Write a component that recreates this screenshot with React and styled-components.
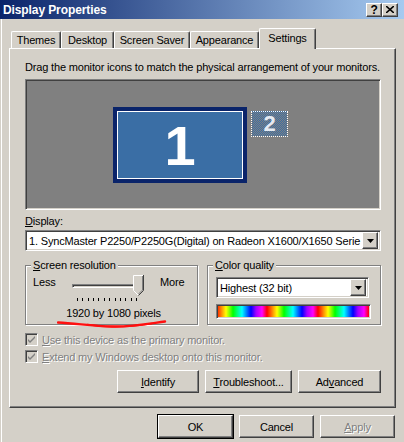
import React from 'react'
import styled, { createGlobalStyle, css } from 'styled-components'

const face = '#D4D0C8'
const shade = '#808080'
const dark = '#404040'

const GlobalStyle = createGlobalStyle`
  html, body {
    margin: 0;
    padding: 0;
    background: ${face};
  }
  body {
    font-family: "Liberation Sans", Arial, sans-serif;
    font-size: 11px;
    letter-spacing: -0.17px;
    color: #000;
  }
`

const raised = css`
  border: 1px solid;
  border-color: #fff ${dark} ${dark} #fff;
  box-shadow: inset -1px -1px 0 ${shade};
`
const sunken = css`
  border: 1px solid;
  border-color: ${shade} #fff #fff ${shade};
  box-shadow: inset 1px 1px 0 ${dark}, inset -1px -1px 0 ${face};
`
const disabledText = css`
  color: ${shade};
  text-shadow: 1px 1px 0 #fff;
`

const Window = styled.div`
  width: 404px;
  height: 442px;
  background: ${face};
  display: flex;
  flex-direction: column;
  overflow: hidden;
`
const TitleBar = styled.div`
  flex: none;
  height: 19px;
  display: flex;
  align-items: center;
  justify-content: space-between;
  padding: 0 6px 0 3px;
  background: linear-gradient(90deg, #0a246a 0%, #a6caf0 100%);
  color: #fff;
  font-weight: bold;
  font-size: 12px;
  letter-spacing: -0.1px;
`
const TitleButtons = styled.div`
  display: flex;
`
const TitleButton = styled.div`
  ${raised}
  width: 16px;
  height: 14px;
  box-sizing: border-box;
  background: ${face};
  color: #000;
  display: flex;
  align-items: center;
  justify-content: center;
  font-size: 12px;
  font-weight: bold;
  line-height: 1;
`
const Body = styled.div`
  flex: 1;
  display: flex;
  flex-direction: column;
  margin-left: 1px;
  border-left: 1px solid #fff;
  padding: 9px 8px 0 7px;
`
const TabRow = styled.div`
  display: flex;
  align-items: flex-end;
  height: 20px;
  padding-left: 2px;
  position: relative;
  z-index: 1;
`
const Tab = styled.div`
  box-sizing: border-box;
  width: ${(p) => p.$w}px;
  height: ${(p) => (p.$active ? 21 : 17)}px;
  margin-bottom: ${(p) => (p.$active ? -1 : 0)}px;
  background: ${face};
  border-top: 1px solid #fff;
  border-left: 1px solid #fff;
  border-right: 1px solid ${dark};
  border-radius: 2px 2px 0 0;
  box-shadow: inset -1px 0 0 ${shade};
  display: flex;
  align-items: center;
  justify-content: center;
  padding-bottom: ${(p) => (p.$active ? 2 : 0)}px;
`
const Panel = styled.div`
  box-sizing: border-box;
  width: 387px;
  height: 360px;
  border-top: 1px solid #fff;
  border-left: 1px solid #fff;
  border-right: 1px solid ${dark};
  border-bottom: 1px solid ${dark};
  box-shadow: inset -1px -1px 0 ${shade};
  padding: 11px 14px 0 15px;
  display: flex;
  flex-direction: column;
`
const Hint = styled.div`
  line-height: 14px;
  white-space: nowrap;
`
const MonitorArea = styled.div`
  ${sunken}
  box-sizing: border-box;
  margin-top: 5px;
  height: 131px;
  background: ${shade};
  position: relative;
`
const Monitor = styled.div`
  position: absolute;
  left: ${(p) => p.$x}px;
  top: ${(p) => p.$y}px;
  width: ${(p) => p.$w}px;
  height: ${(p) => p.$h}px;
  box-sizing: border-box;
  display: flex;
  align-items: center;
  justify-content: center;
  color: #fff;
  font-weight: bold;
  letter-spacing: 0;
`
const PrimaryMonitor = styled(Monitor)`
  border: 4px solid #0a246a;
  box-shadow: inset 0 0 0 1px #fff;
  background: #3a6ea5;
  font-size: 56px;
`
const SecondaryMonitor = styled(Monitor)`
  border: 1px dotted #fff;
  background: repeating-conic-gradient(#3a6ea5 0 25%, ${shade} 0 50%) 0 0 / 2px 2px;
  font-size: 22px;
  color: #e4eaf2;
`
const FieldLabel = styled.div`
  margin-top: 5px;
  line-height: 13px;
`
const Key = styled.span`
  text-decoration: underline;
  text-underline-offset: 1px;
`
const Select = styled.div`
  ${sunken}
  box-sizing: border-box;
  height: 21px;
  width: ${(p) => (p.$w ? `${p.$w}px` : '100%')};
  margin-top: ${(p) => p.$mt || 0}px;
  background: #fff;
  display: flex;
  align-items: center;
  padding: 2px;
`
const SelectText = styled.div`
  flex: 1;
  min-width: 0;
  overflow: hidden;
  white-space: nowrap;
  padding-left: 1px;
`
const DropButton = styled.div`
  ${raised}
  flex: none;
  box-sizing: border-box;
  width: 16px;
  height: 17px;
  background: ${face};
  display: flex;
  align-items: center;
  justify-content: center;
`
const GroupRow = styled.div`
  display: flex;
  gap: 9px;
  margin-top: 14px;
`
const Group = styled.div`
  position: relative;
  box-sizing: border-box;
  width: ${(p) => p.$w}px;
  height: 60px;
  border: 1px solid ${shade};
  box-shadow: inset 1px 1px 0 #fff, 1px 1px 0 #fff;
  padding: ${(p) => p.$pad};
  display: flex;
  flex-direction: column;
`
const Caption = styled.div`
  position: absolute;
  top: -7px;
  left: 5px;
  padding: 0 2px;
  background: ${face};
  line-height: 13px;
`
const SliderRow = styled.div`
  display: flex;
  align-items: flex-start;
  height: 26px;
`
const EndLabel = styled.div`
  width: ${(p) => p.$w}px;
  margin-left: ${(p) => p.$ml || 0}px;
  line-height: 13px;
  margin-top: 1px;
`
const Slider = styled.div`
  width: 72px;
  display: flex;
  flex-direction: column;
`
const TrackArea = styled.div`
  position: relative;
  height: 23px;
`
const Track = styled.div`
  ${sunken}
  box-sizing: border-box;
  width: 68px;
  height: 4px;
  margin-top: 9px;
`
const Thumb = styled.svg`
  position: absolute;
  left: 61px;
  top: 0;
`
const Ticks = styled.div`
  display: flex;
  justify-content: space-between;
  width: 60px;
  height: 3px;
  margin-left: 5px;
`
const Tick = styled.span`
  width: 1px;
  height: 3px;
  background: #000;
`
const Pixels = styled.div`
  text-align: center;
  line-height: 13px;
  margin-top: 6px;
  padding-right: 3px;
`
const Scribble = styled.svg`
  position: absolute;
  left: 31px;
  top: 54px;
`
const Spectrum = styled.div`
  ${sunken}
  box-sizing: border-box;
  width: 155px;
  height: 15px;
  margin-top: 6px;
  background-origin: border-box;
  background-image: repeating-linear-gradient(
    90deg,
    #ff0000 0px,
    #ff8000 5px,
    #ffff00 10px,
    #00ff00 17px,
    #00ffff 26px,
    #0000ff 35px,
    #a000ff 40px,
    #ff00ff 46px,
    #ff0000 51px
  );
`
const CheckRow = styled.div`
  display: flex;
  align-items: center;
  height: 17px;
  margin-top: ${(p) => p.$mt || 0}px;
  ${disabledText}
`
const CheckBox = styled.div`
  ${sunken}
  box-sizing: border-box;
  width: 13px;
  height: 13px;
  background: ${face};
  margin-right: 4px;
  display: flex;
  align-items: center;
  justify-content: center;
  text-shadow: none;
`
const ButtonRow = styled.div`
  display: flex;
  justify-content: flex-end;
  gap: ${(p) => p.$gap}px;
  margin-top: ${(p) => p.$mt}px;
  padding-right: ${(p) => p.$pr || 0}px;
`
const Button = styled.div`
  ${raised}
  box-sizing: border-box;
  width: ${(p) => p.$w}px;
  height: 23px;
  background: ${face};
  display: flex;
  align-items: center;
  justify-content: center;
  ${(p) => p.$disabled && disabledText}
  ${(p) =>
    p.$default &&
    css`
      box-shadow: inset -1px -1px 0 ${shade}, 0 0 0 1px #000;
    `}
`

const Arrow = () => (
  <svg width="7" height="4" viewBox="0 0 7 4">
    <path d="M0 0 H7 L3.5 4 Z" fill="#000" />
  </svg>
)

const Check = () => (
  <svg width="7" height="7" viewBox="0 0 7 7">
    <path d="M0 2 L2 4 L7 -1 V1 L2 6 L0 4 Z" fill={shade} transform="translate(0 1)" />
  </svg>
)

const tabs = [
  ['Themes', 50],
  ['Desktop', 53],
  ['Screen Saver', 76],
  ['Appearance', 69],
  ['Settings', 57, true],
]

export default function App() {
  return (
    <>
      <GlobalStyle />
      <Window>
        <TitleBar>
          <span>Display Properties</span>
          <TitleButtons>
            <TitleButton>?</TitleButton>
            <TitleButton>
              <svg width="8" height="7" viewBox="0 0 8 7">
                <path d="M0 0 L8 7 M8 0 L0 7" stroke="#000" strokeWidth="1.6" />
              </svg>
            </TitleButton>
          </TitleButtons>
        </TitleBar>
        <Body>
          <TabRow>
            {tabs.map(([label, w, active]) => (
              <Tab key={label} $w={w} $active={active}>
                {label}
              </Tab>
            ))}
          </TabRow>
          <Panel>
            <Hint>Drag the monitor icons to match the physical arrangement of your monitors.</Hint>
            <MonitorArea>
              <PrimaryMonitor $x={87} $y={27} $w={134} $h={76}>1</PrimaryMonitor>
              <SecondaryMonitor $x={225} $y={31} $w={37} $h={26}>2</SecondaryMonitor>
            </MonitorArea>
            <FieldLabel>
              <Key>D</Key>isplay:
            </FieldLabel>
            <Select $mt={2}>
              <SelectText>1. SyncMaster P2250/P2250G(Digital) on Radeon X1600/X1650 Serie</SelectText>
              <DropButton>
                <Arrow />
              </DropButton>
            </Select>
            <GroupRow>
              <Group $w={173} $pad="9px 0 0 7px">
                <Caption>
                  <Key>S</Key>creen resolution
                </Caption>
                <SliderRow>
                  <EndLabel $w={39}>Less</EndLabel>
                  <Slider>
                    <TrackArea>
                      <Track />
                      <Thumb width="11" height="21" viewBox="0 0 11 21">
                        <path d="M0.5 0.5 H10.5 V15.5 L5.5 20.5 L0.5 15.5 Z" fill={face} />
                        <path d="M0.5 15.5 V0.5 H10" stroke="#fff" fill="none" />
                        <path d="M0.5 15.5 L5 20" stroke="#fff" fill="none" />
                        <path d="M10.5 0 V15.5 L5.5 20.5" stroke={dark} fill="none" />
                        <path d="M9.5 1 V15 L5.5 19" stroke={shade} fill="none" />
                      </Thumb>
                    </TrackArea>
                    <Ticks>
                      {Array.from({ length: 12 }, (_, i) => (
                        <Tick key={i} />
                      ))}
                    </Ticks>
                  </Slider>
                  <EndLabel $w={30} $ml={16}>More</EndLabel>
                </SliderRow>
                <Pixels>1920 by 1080 pixels</Pixels>
                <Scribble width="110" height="9" viewBox="0 0 110 9">
                  <path
                    d="M1 2.5 C 20 3.5, 35 6, 55 6.5 C 75 7, 90 4, 108 1.5"
                    stroke="#ff1010"
                    strokeWidth="2.4"
                    fill="none"
                    strokeLinecap="round"
                  />
                  <path
                    d="M30 4.5 C 45 7, 70 7.5, 95 3.5"
                    stroke="#ff1010"
                    strokeWidth="1.6"
                    fill="none"
                  />
                </Scribble>
              </Group>
              <Group $w={174} $pad="11px 0 0 8px">
                <Caption>
                  <Key>C</Key>olor quality
                </Caption>
                <Select $w={153}>
                  <SelectText>Highest (32 bit)</SelectText>
                  <DropButton>
                    <Arrow />
                  </DropButton>
                </Select>
                <Spectrum />
              </Group>
            </GroupRow>
            <CheckRow $mt={6}>
              <CheckBox>
                <Check />
              </CheckBox>
              <span>
                <Key>U</Key>se this device as the primary monitor.
              </span>
            </CheckRow>
            <CheckRow>
              <CheckBox>
                <Check />
              </CheckBox>
              <span>
                <Key>E</Key>xtend my Windows desktop onto this monitor.
              </span>
            </CheckRow>
            <ButtonRow $gap={6} $mt={5}>
              <Button $w={82}>
                <span>
                  <Key>I</Key>dentify
                </span>
              </Button>
              <Button $w={87}>
                <span>
                  <Key>T</Key>roubleshoot...
                </span>
              </Button>
              <Button $w={83}>
                <span>
                  Ad<Key>v</Key>anced
                </span>
              </Button>
            </ButtonRow>
          </Panel>
          <ButtonRow $gap={6} $mt={7} $pr={1}>
            <Button $w={75} $default>
              OK
            </Button>
            <Button $w={75}>Cancel</Button>
            <Button $w={75} $disabled>
              <span>
                <Key>A</Key>pply
              </span>
            </Button>
          </ButtonRow>
        </Body>
      </Window>
    </>
  )
}
